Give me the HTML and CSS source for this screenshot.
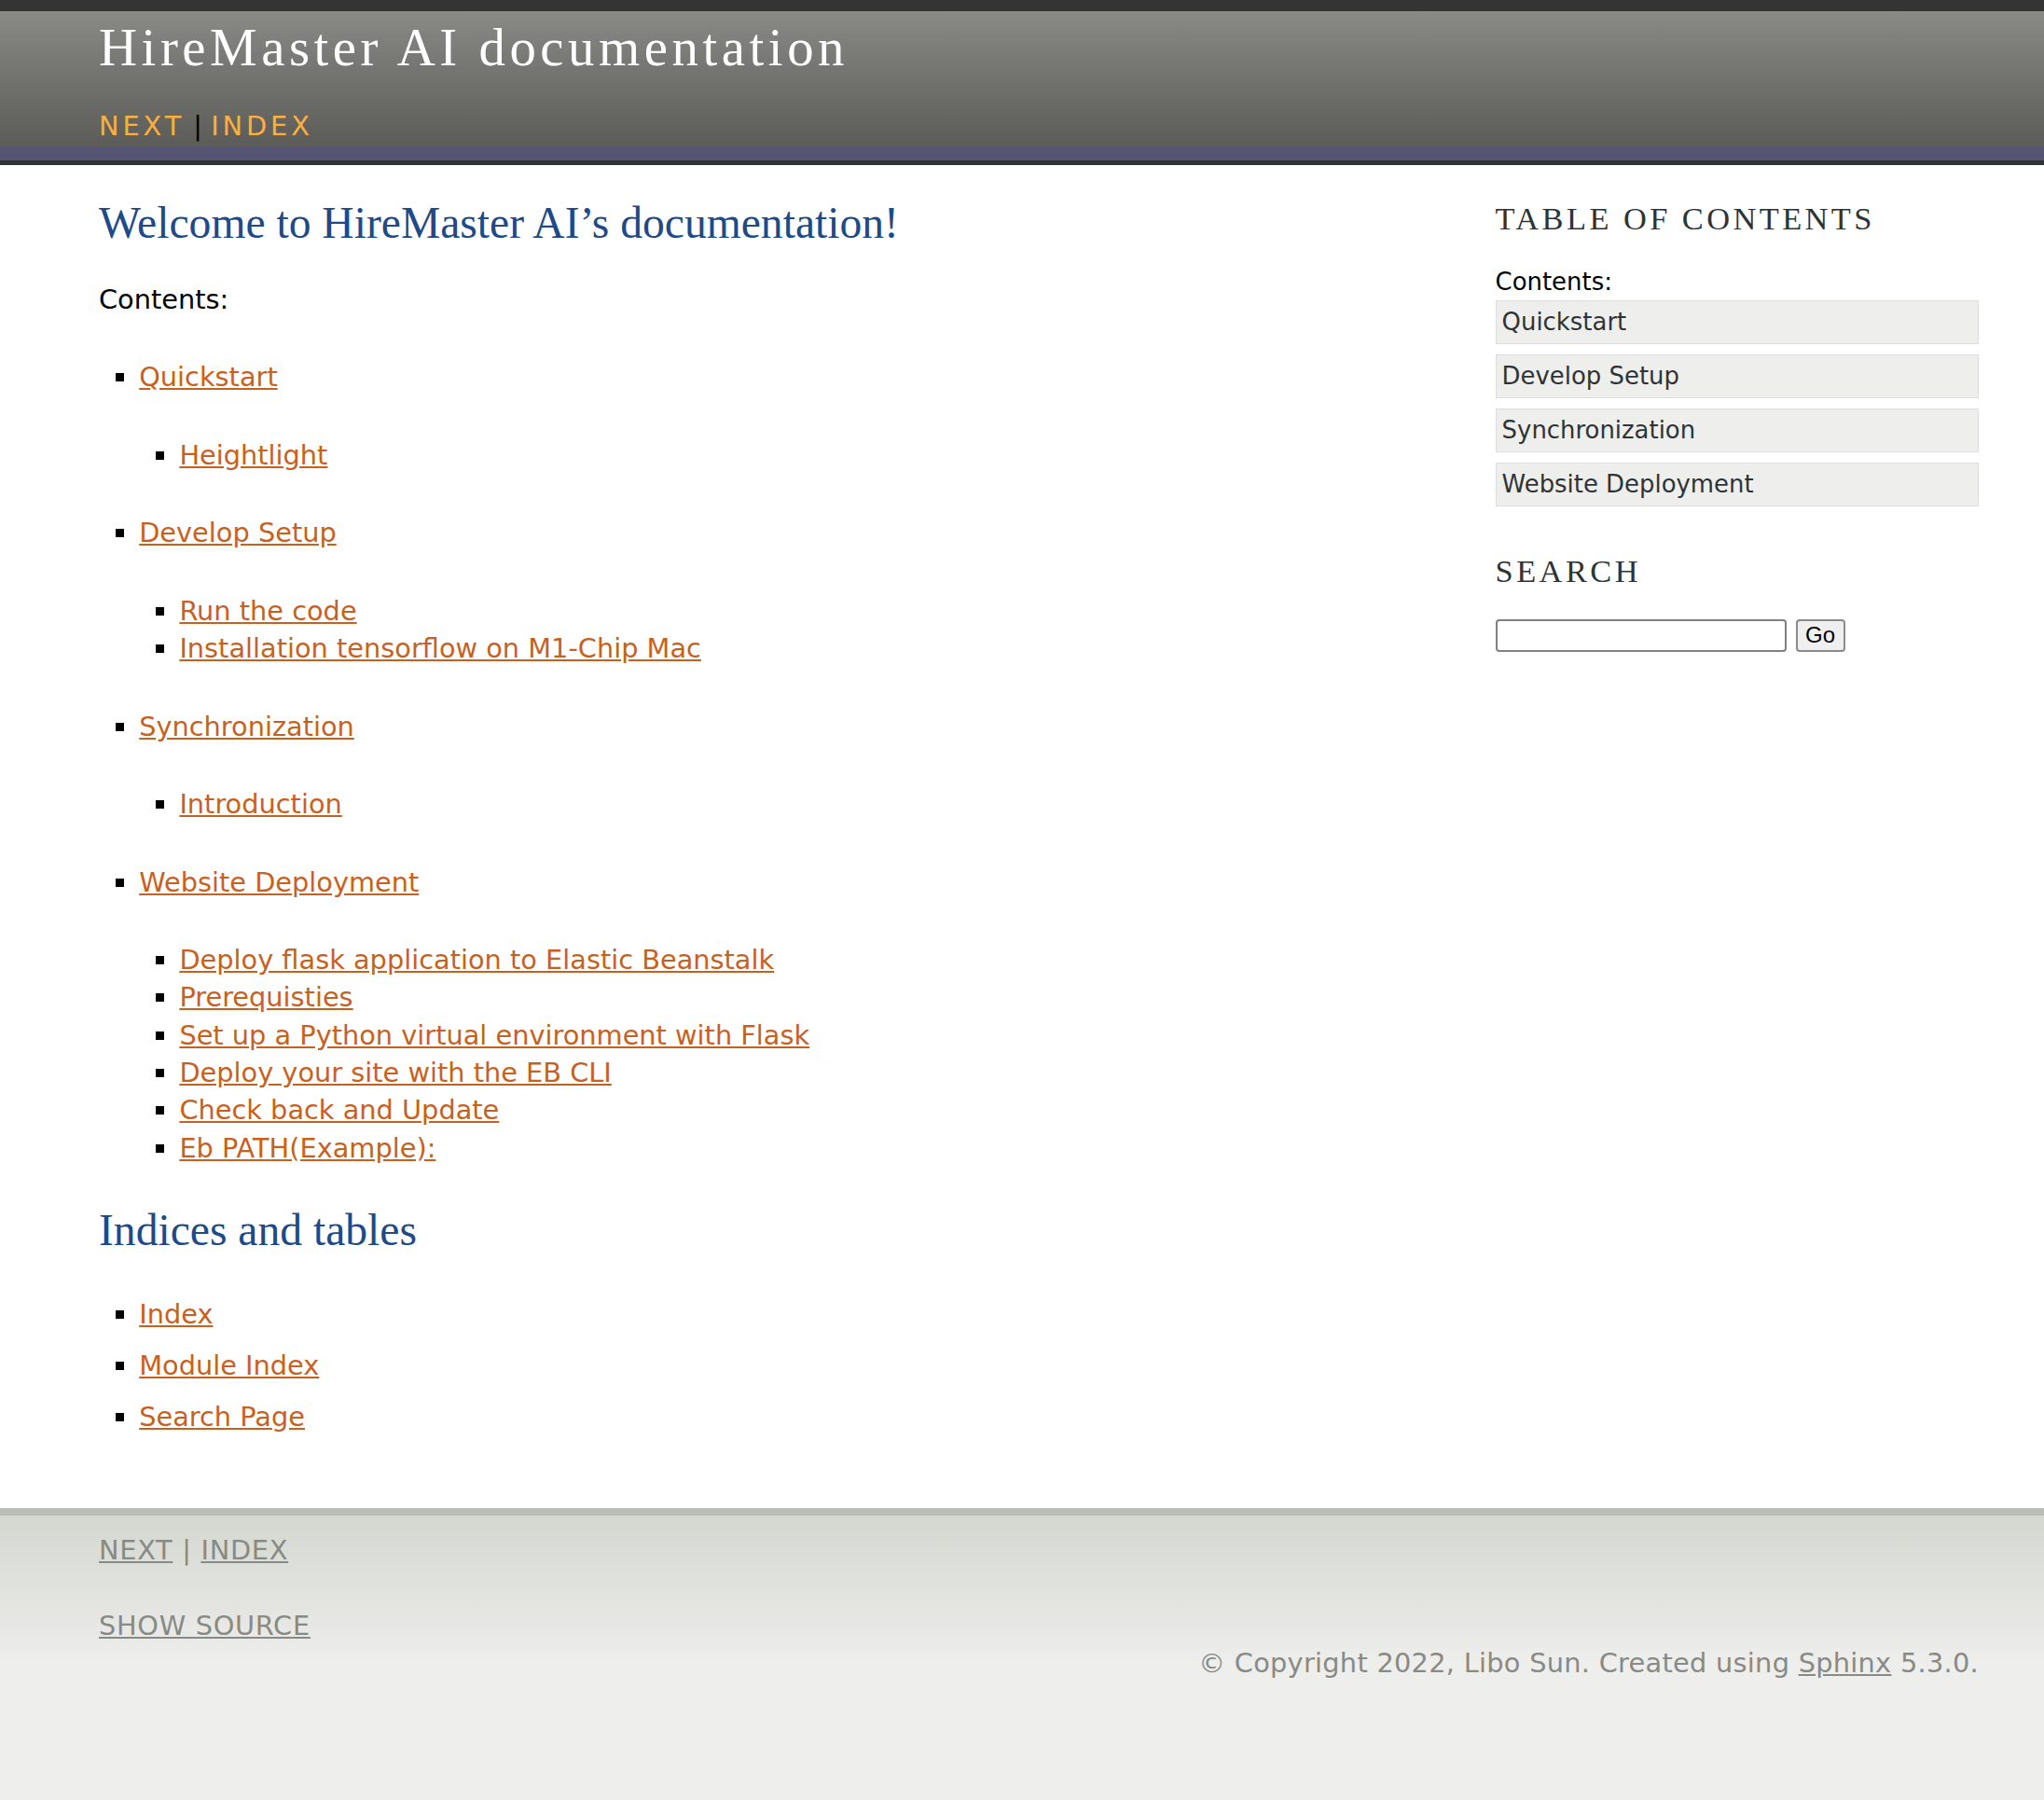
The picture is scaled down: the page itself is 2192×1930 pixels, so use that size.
FILE: index.html
```html
<!DOCTYPE html>
<html lang="en">
<head>
<meta charset="utf-8">
<title>Welcome to HireMaster AI’s documentation! — HireMaster AI documentation</title>
<link rel="stylesheet" href="styles.css">
</head>
<body>
<div class="header-wrapper">
  <div class="header">
    <div class="headertitle"><a href="#">HireMaster AI documentation</a></div>
    <div class="rel"><a href="#">next</a> | <a href="#">index</a></div>
  </div>
</div>

<div class="content-wrapper">
  <div class="content">
    <div class="document">
      <div class="body">
        <section class="section">
          <h1>Welcome to HireMaster AI’s documentation!</h1>
          <div class="toctree-wrapper">
            <p class="caption">Contents:</p>
            <ul class="toc">
              <li class="l1"><a href="#">Quickstart</a>
                <ul><li><a href="#">Heightlight</a></li></ul>
              </li>
              <li class="l1"><a href="#">Develop Setup</a>
                <ul>
                  <li><a href="#">Run the code</a></li>
                  <li><a href="#">Installation tensorflow on M1-Chip Mac</a></li>
                </ul>
              </li>
              <li class="l1"><a href="#">Synchronization</a>
                <ul><li><a href="#">Introduction</a></li></ul>
              </li>
              <li class="l1"><a href="#">Website Deployment</a>
                <ul>
                  <li><a href="#">Deploy flask application to Elastic Beanstalk</a></li>
                  <li><a href="#">Prerequisties</a></li>
                  <li><a href="#">Set up a Python virtual environment with Flask</a></li>
                  <li><a href="#">Deploy your site with the EB CLI</a></li>
                  <li><a href="#">Check back and Update</a></li>
                  <li><a href="#">Eb PATH(Example):</a></li>
                </ul>
              </li>
            </ul>
          </div>
        </section>
        <section class="section">
          <h1>Indices and tables</h1>
          <ul class="simple">
            <li><p><a href="#">Index</a></p></li>
            <li><p><a href="#">Module Index</a></p></li>
            <li><p><a href="#">Search Page</a></p></li>
          </ul>
        </section>
      </div>
    </div>

    <div class="sidebar">
      <h3>Table of Contents</h3>
      <p class="caption">Contents:</p>
      <ul class="side-toc">
        <li><a href="#">Quickstart</a></li>
        <li><a href="#">Develop Setup</a></li>
        <li><a href="#">Synchronization</a></li>
        <li><a href="#">Website Deployment</a></li>
      </ul>
      <div role="search">
        <h3 class="search-title">Search</h3>
        <form class="search" action="#">
          <input class="search-input" type="text" name="q" aria-label="search">
          <input class="search-go" type="submit" value="Go">
        </form>
      </div>
    </div>
  </div>
</div>

<div class="footer-wrapper">
  <div class="footer">
    <div class="footer-left">
      <div class="footer-nav"><a href="#">next</a> | <a href="#">index</a></div>
      <div class="source-link"><a href="#">Show Source</a></div>
    </div>
    <div class="footer-right">© Copyright 2022, Libo Sun. Created using <a href="#">Sphinx</a> 5.3.0.</div>
  </div>
</div>
</body>
</html>
```

FILE: styles.css
```css
* {
  margin: 0;
  padding: 0;
}

body {
  font-family: "DejaVu Sans", Verdana, sans-serif;
  font-size: 28.8px;
  line-height: 40.32px;
  color: #000;
  background-color: #eeeeec;
}

a {
  color: #c8611e;
}

/* Header */
.header-wrapper {
  background: linear-gradient(to bottom,
      #343434 0, #343434 12px,
      #898a85 12px, #5b5c58 158px,
      #555573 158px, #555573 100%);
  border-bottom: 5px solid #2e3436;
}

.header,
.content,
.footer {
  width: 70em;
  margin-left: 106px;
}

.header {
  padding: 21px 0 17px;
}

.headertitle {
  font-family: "Liberation Serif", "Times New Roman", serif;
  font-size: 56.8px;
  line-height: 60px;
  letter-spacing: 0.08em;
}

.headertitle a {
  color: #fff;
  text-decoration: none;
}

.rel {
  margin-top: 34px;
}

.rel a {
  color: #fcaf3e;
  letter-spacing: 3.9px;
  text-transform: uppercase;
  text-decoration: none;
}

/* Content */
.content-wrapper {
  background-color: #fff;
  padding: 37px 0 35px;
}

.content {
  display: flex;
  justify-content: space-between;
  align-items: flex-start;
}

.document {
  width: 50em;
}

.body {
  padding-right: 2em;
}

.body h1 {
  font-family: "Liberation Serif", "Times New Roman", serif;
  font-weight: normal;
  font-size: 47.6px;
  line-height: 51.84px;
  color: #204a87;
  margin-bottom: 34.56px;
}

.body .caption {
  margin-bottom: 14.4px;
}

.body ul {
  margin: 43.2px;
  list-style-type: square;
}

.body li.l1 {
  margin-bottom: 28.8px;
}

.body li p {
  margin-bottom: 14.4px;
}

.body a {
  text-decoration: underline;
}

/* Sidebar */
.sidebar {
  width: 20em;
  font-size: 0.9em;
}

.sidebar h3 {
  font-family: "Liberation Serif", "Times New Roman", serif;
  font-weight: normal;
  font-size: 34.4px;
  color: #2e3436;
  text-transform: uppercase;
  letter-spacing: 0.1em;
  margin-bottom: 26.96px;
}

.side-toc {
  list-style: none;
}

.side-toc a {
  display: block;
  padding: 2.3px 2px 2.3px 6px;
  border: 1px solid #dddddd;
  background-color: #eeeeec;
  margin-bottom: 11px;
  color: #2e3436;
  text-decoration: none;
}

.sidebar .search-title {
  margin-top: 49px;
}

.search {
  display: flex;
  gap: 10px;
  padding-top: 5px;
}

.search-input {
  box-sizing: border-box;
  width: 312px;
  height: 35px;
  border: 2px solid #808080;
  border-radius: 4px;
  background: #fff;
}

.search-go {
  box-sizing: border-box;
  width: 53px;
  height: 35px;
  border: 2px solid #8a8a8a;
  border-radius: 4px;
  background: #efefef;
  font-family: "Liberation Sans", Arial, sans-serif;
  font-size: 24px;
  color: #000;
}

/* Footer */
.footer-wrapper {
  background: linear-gradient(to bottom, #d4d7d0 0, #eeeeec 160px);
  border-top: 8px solid #babdb6;
  padding: 17px 0 20px;
  min-height: 160px;
}

.footer,
.footer a {
  color: #888a85;
}

.footer-left {
  text-transform: uppercase;
  letter-spacing: 0.7px;
}

.source-link {
  margin-top: 40.32px;
}

.footer-right {
  text-align: right;
  letter-spacing: 0.28px;
}
```
